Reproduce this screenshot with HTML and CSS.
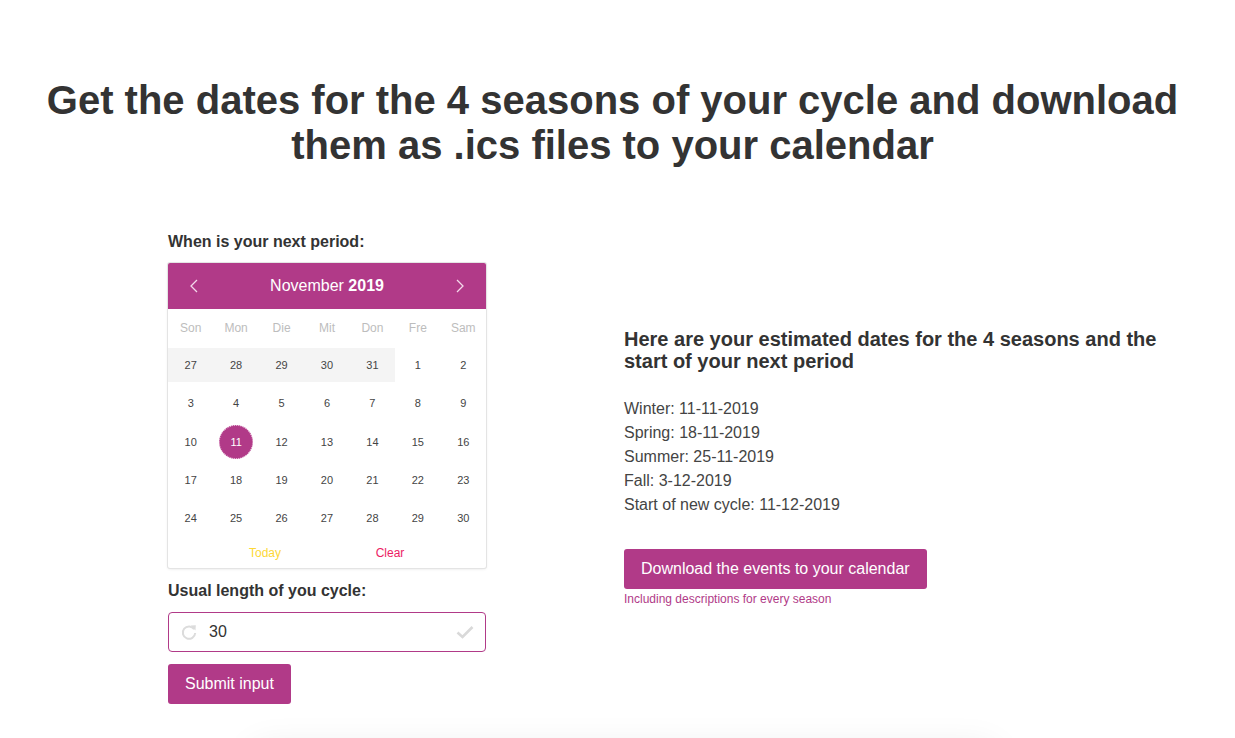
FILE: index.html
```html
<!DOCTYPE html>
<html lang="en">
<head>
<meta charset="utf-8">
<title>Seasons of your cycle</title>
<link rel="stylesheet" href="styles.css">
</head>
<body>
<h1 class="title">Get the dates for the 4 seasons of your cycle and download them as .ics files to your calendar</h1>
<main class="main">
  <section class="left">
    <label class="label">When is your next period:</label>
    <div class="cal">
      <div class="cal-head">
        <span class="nav"><svg width="10" height="14" viewBox="0 0 10 14"><path d="M8 1 L2 7 L8 13" fill="none" stroke="#f3d9ea" stroke-width="1.3"/></svg></span>
        <span class="month">November <b>2019</b></span>
        <span class="nav"><svg width="10" height="14" viewBox="0 0 10 14"><path d="M2 1 L8 7 L2 13" fill="none" stroke="#f3d9ea" stroke-width="1.3"/></svg></span>
      </div>
      <div class="grid wk">
        <span>Son</span><span>Mon</span><span>Die</span><span>Mit</span><span>Don</span><span>Fre</span><span>Sam</span>
      </div>
      <div class="grid days">
        <span class="prev">27</span><span class="prev">28</span><span class="prev">29</span><span class="prev">30</span><span class="prev">31</span><span>1</span><span>2</span>
        <span>3</span><span>4</span><span>5</span><span>6</span><span>7</span><span>8</span><span>9</span>
        <span>10</span><span><i class="sel">11</i></span><span>12</span><span>13</span><span>14</span><span>15</span><span>16</span>
        <span>17</span><span>18</span><span>19</span><span>20</span><span>21</span><span>22</span><span>23</span>
        <span>24</span><span>25</span><span>26</span><span>27</span><span>28</span><span>29</span><span>30</span>
      </div>
      <div class="cal-foot">
        <span class="today">Today</span>
        <span class="clear">Clear</span>
      </div>
    </div>
    <label class="label label2">Usual length of you cycle:</label>
    <div class="input">
      <svg class="ico" width="18" height="18" viewBox="0 0 18 18"><path d="M14.2 6.2 A6.2 6.2 0 1 0 15.2 10" fill="none" stroke="#dcdcdc" stroke-width="2"/><path d="M10.5 2.5 L15.8 2.2 L15.5 7.5 Z" fill="#dcdcdc"/></svg>
      <span class="val">30</span>
      <svg class="check" width="18" height="14" viewBox="0 0 18 14"><path d="M1.5 7.5 L6.5 12 L16.5 2" fill="none" stroke="#d9d9d9" stroke-width="2.6"/></svg>
    </div>
    <button class="btn submit">Submit input</button>
  </section>
  <section class="right">
    <h2 class="sub">Here are your estimated dates for the 4 seasons and the start of your next period</h2>
    <ul class="dates">
      <li>Winter: 11-11-2019</li>
      <li>Spring: 18-11-2019</li>
      <li>Summer: 25-11-2019</li>
      <li>Fall: 3-12-2019</li>
      <li>Start of new cycle: 11-12-2019</li>
    </ul>
    <button class="btn download">Download the events to your calendar</button>
    <p class="note">Including descriptions for every season</p>
  </section>
</main>
<div class="below"></div>
</body>
</html>
```

FILE: styles.css
```css
* { box-sizing: border-box; }
html, body { margin: 0; padding: 0; background: #fff; }
body {
  font-family: "Liberation Sans", Arial, Helvetica, sans-serif;
  color: #333;
  overflow: hidden;
  height: 738px;
}
.title {
  margin: 78px 0 0;
  padding: 0 37px 0 27px;
  text-align: center;
  font-size: 40px;
  line-height: 45px;
  font-weight: 700;
  color: #333;
}
.main {
  display: flex;
  align-items: center;
  padding-left: 168px;
  margin-top: 64px;
}
.left { width: 318px; display: flex; flex-direction: column; }
.label {
  display: block;
  font-size: 16px;
  line-height: 20px;
  font-weight: 700;
  color: #333;
}
.cal {
  margin-top: 11px;
  width: 318px;
  background: #fff;
  border-radius: 2px;
  box-shadow: 0 0 0 1px #e4e4e4, 0 1px 3px rgba(0,0,0,0.12);
}
.cal-head {
  height: 46px;
  background: #b13a88;
  color: #fff;
  display: flex;
  align-items: center;
  justify-content: space-between;
  padding: 0 21px;
  border-radius: 2px 2px 0 0;
}
.nav { display: flex; align-items: center; width: 10px; }
.month { font-size: 16px; }
.month b { font-weight: 700; }
.grid {
  display: grid;
  grid-template-columns: repeat(7, 1fr);
  text-align: center;
}
.wk { height: 37px; align-items: center; font-size: 12px; color: #bdbdbd; }
.days { grid-auto-rows: 38.25px; font-size: 11px; color: #444; }
.days span { display: flex; align-items: center; justify-content: center; }
.days .prev { background: #f4f4f4; margin: 2px 0; }
.sel {
  font-style: normal;
  width: 34px;
  height: 34px;
  border-radius: 50%;
  background: #b13a88;
  color: #fff;
  display: flex;
  align-items: center;
  justify-content: center;
  border: 1px dotted #e9b7d8;
}
.cal-foot {
  height: 31px;
  display: flex;
  align-items: center;
  font-size: 12px;
}
.today { color: #fdd835; width: 100px; text-align: center; margin-left: 47px; }
.clear { color: #ec1c64; width: 100px; text-align: center; margin-left: 25px; }
.label2 { margin-top: 13px; }
.input {
  margin-top: 11px;
  height: 40px;
  border: 1px solid #b13a88;
  border-radius: 4px;
  display: flex;
  align-items: center;
  padding: 0 11px;
}
.val { font-size: 16px; color: #333; margin-left: 11px; flex: 1; }
.btn {
  font-family: "Liberation Sans", Arial, Helvetica, sans-serif;
  background: #b13a88;
  color: #fff;
  border: none;
  border-radius: 3px;
  font-size: 16px;
  height: 40px;
  padding: 0 17px;
  cursor: pointer;
}
.submit { margin-top: 12px; align-self: flex-start; }
.right { margin-left: 138px; width: 560px; }
.sub {
  margin: -2px 0 0;
  font-size: 20px;
  line-height: 22px;
  font-weight: 700;
  color: #333;
}
.dates {
  list-style: none;
  margin: 25px 0 0;
  padding: 0;
  font-size: 16px;
  line-height: 24px;
  color: #444;
}
.download { margin-top: 32px; height: 40px; }
.note { margin: 3px 0 0; font-size: 12px; line-height: 14px; color: #b13a88; }
.below {
  margin: 45px auto 0;
  width: 740px;
  height: 200px;
  background: #fff;
  box-shadow: 0 0 35px rgba(0,0,0,0.09);
  position: relative;
  left: 6px;
}
```
